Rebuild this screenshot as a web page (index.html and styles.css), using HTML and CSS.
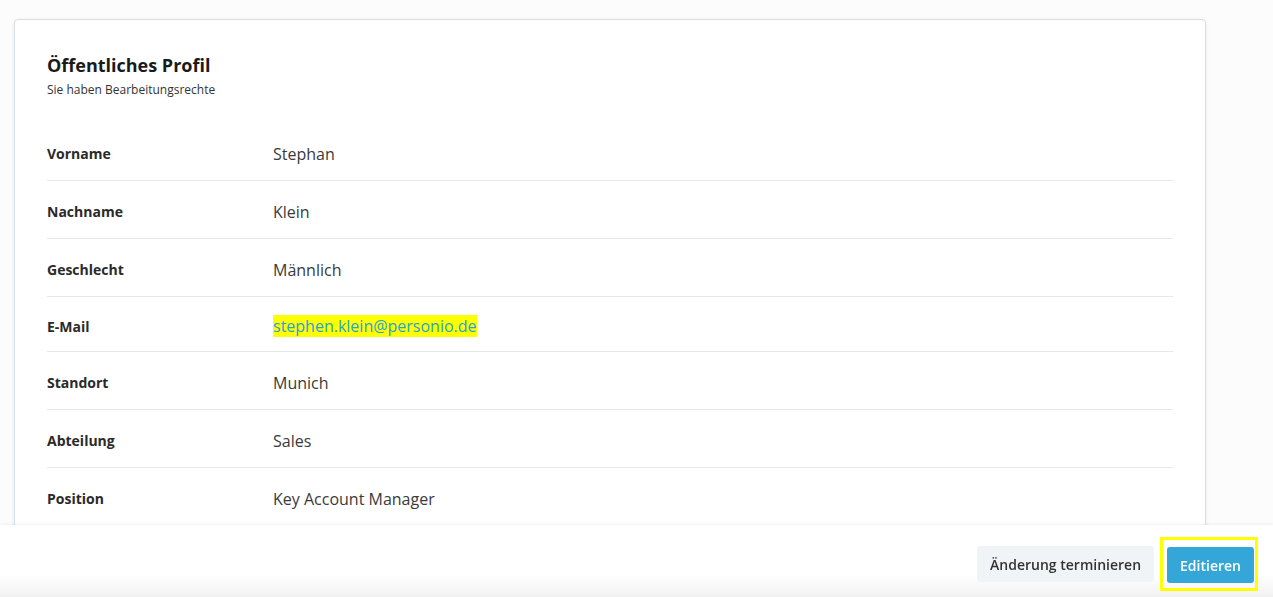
FILE: index.html
```html
<!DOCTYPE html>
<html lang="de">
<head>
<meta charset="utf-8">
<title>Öffentliches Profil</title>
<link rel="stylesheet" href="styles.css">
</head>
<body>
<div class="page">
  <section class="card">
    <h1 class="title">Öffentliches Profil</h1>
    <p class="subtitle">Sie haben Bearbeitungsrechte</p>
    <div class="rows">
      <div class="row"><span class="label">Vorname</span><span class="value">Stephan</span></div>
      <div class="row"><span class="label">Nachname</span><span class="value">Klein</span></div>
      <div class="row"><span class="label">Geschlecht</span><span class="value">Männlich</span></div>
      <div class="row row-email"><span class="label">E-Mail</span><span class="value"><a class="mail" href="#">stephen.klein@personio.de</a></span></div>
      <div class="row"><span class="label">Standort</span><span class="value">Munich</span></div>
      <div class="row"><span class="label">Abteilung</span><span class="value">Sales</span></div>
      <div class="row"><span class="label">Position</span><span class="value">Key Account Manager</span></div>
      <div class="row"><span class="label">Vorgesetzter</span><span class="value">Anna Schmidt</span></div>
    </div>
  </section>
</div>
<footer class="footer">
  <button class="btn btn-secondary">Änderung terminieren</button>
  <span class="highlight"><button class="btn btn-primary">Editieren</button></span>
</footer>
</body>
</html>
```
FILE: styles.css
```css
* { box-sizing: border-box; }
html, body { margin: 0; padding: 0; }
body {
  background: #fcfcfc;
  font-family: "Open Sans", "Liberation Sans", sans-serif;
  color: #2b2b2b;
  height: 597px;
  overflow: hidden;
}
.page {
  padding: 19px 0 0 14px;
}
.card {
  width: 1192px;
  background: #fff;
  border: 1px solid #d6dfe5;
  border-radius: 4px;
  box-shadow: 0 1px 4px rgba(0, 0, 0, 0.07);
  padding: 33px 32px 40px 32px;
}
.title {
  margin: 0;
  font-size: 18px;
  line-height: 24px;
  font-weight: 700;
  color: #1a1a1a;
}
.subtitle {
  margin: 5px 0 0 0;
  font-size: 12px;
  line-height: 16px;
  color: #333;
}
.rows {
  margin-top: 25px;
}
.row {
  display: flex;
  align-items: center;
  height: 58px;
  padding-top: 4px;
  border-bottom: 1px solid #e6e8ea;
}
.row-email {
  height: 55px;
}
.label {
  width: 226px;
  font-size: 14px;
  font-weight: 700;
  color: #2a2a2a;
}
.value {
  font-size: 16px;
  line-height: 24px;
  color: #3a3a3a;
}
.mail {
  color: #27a3d6;
  text-decoration: none;
  background: #ffff00;
  display: inline-block;
  line-height: 22px;
}
.footer {
  position: fixed;
  left: 0;
  right: 0;
  bottom: 0;
  height: 72px;
  display: flex;
  justify-content: flex-end;
  align-items: center;
  gap: 6px;
  padding: 12px 15px 6px 0;
  background: linear-gradient(to bottom, #ffffff 0%, #ffffff 70%, #f1f1f1 100%);
  box-shadow: 0 -1px 3px rgba(0, 0, 0, 0.06);
}
.btn {
  font-family: "Open Sans", "Liberation Sans", sans-serif;
  font-size: 14px;
  font-weight: 600;
  height: 36px;
  border: none;
  border-radius: 3px;
  padding: 0 13px;
  cursor: pointer;
}
.btn-secondary {
  background: #f1f4f7;
  color: #333;
}
.btn-primary {
  background: #35a6d8;
  color: #fff;
  padding: 0 13px;
}
.highlight {
  display: flex;
  border: 3px solid #ffff00;
  padding: 7px 1px 5px 4px;
}
```
